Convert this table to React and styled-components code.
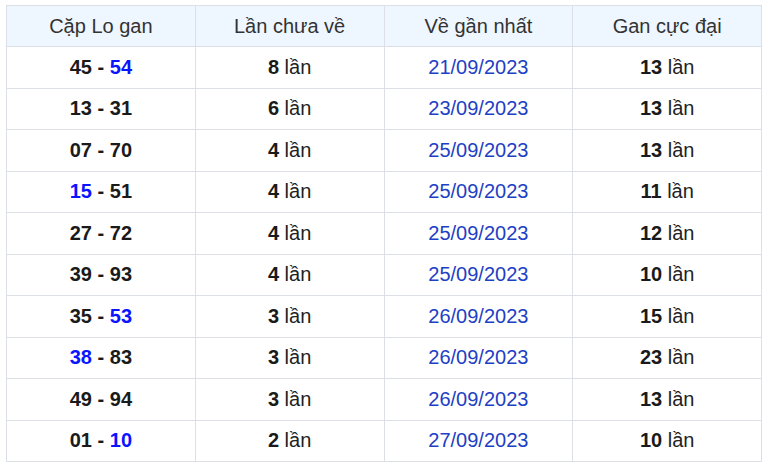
import React from "react";
import styled, { createGlobalStyle } from "styled-components";

const rows = [
  { a: "45", b: "54", hl: "b", count: 8, date: "21/09/2023", max: 13 },
  { a: "13", b: "31", hl: null, count: 6, date: "23/09/2023", max: 13 },
  { a: "07", b: "70", hl: null, count: 4, date: "25/09/2023", max: 13 },
  { a: "15", b: "51", hl: "a", count: 4, date: "25/09/2023", max: 11 },
  { a: "27", b: "72", hl: null, count: 4, date: "25/09/2023", max: 12 },
  { a: "39", b: "93", hl: null, count: 4, date: "25/09/2023", max: 10 },
  { a: "35", b: "53", hl: "b", count: 3, date: "26/09/2023", max: 15 },
  { a: "38", b: "83", hl: "a", count: 3, date: "26/09/2023", max: 23 },
  { a: "49", b: "94", hl: null, count: 3, date: "26/09/2023", max: 13 },
  { a: "01", b: "10", hl: "b", count: 2, date: "27/09/2023", max: 10 },
];

const GlobalStyle = createGlobalStyle`
  body {
    margin: 0;
    background: #fff;
    font-family: "Liberation Sans", Arial, sans-serif;
  }
`;

const Page = styled.div`
  padding: 5px 6px;
`;

const Table = styled.table`
  width: 756px;
  border-collapse: collapse;
  table-layout: fixed;
`;

const Th = styled.th`
  height: 40px;
  padding: 0;
  background: #eef6ff;
  border: 1px solid #dcdfe5;
  font-weight: 400;
  font-size: 20px;
  color: #333;
  text-align: center;
`;

const Td = styled.td`
  height: 40.5px;
  padding: 0;
  border: 1px solid #dcdfe5;
  font-size: 20px;
  color: #222;
  text-align: center;
`;

const Num = styled.span`
  font-weight: 700;
  color: ${(p) => (p.$hl ? "#0a14ff" : "#1a1a1a")};
`;

const DateText = styled.span`
  color: #1d40c4;
`;

export default function App() {
  return (
    <Page>
      <GlobalStyle />
      <Table>
        <thead>
          <tr>
            <Th>Cặp Lo gan</Th>
            <Th>Lần chưa về</Th>
            <Th>Về gần nhất</Th>
            <Th>Gan cực đại</Th>
          </tr>
        </thead>
        <tbody>
          {rows.map((r, i) => (
            <tr key={i}>
              <Td>
                <Num $hl={r.hl === "a"}>{r.a}</Num> <Num>-</Num>{" "}
                <Num $hl={r.hl === "b"}>{r.b}</Num>
              </Td>
              <Td>
                <Num>{r.count}</Num> lần
              </Td>
              <Td>
                <DateText>{r.date}</DateText>
              </Td>
              <Td>
                <Num>{r.max}</Num> lần
              </Td>
            </tr>
          ))}
        </tbody>
      </Table>
    </Page>
  );
}
